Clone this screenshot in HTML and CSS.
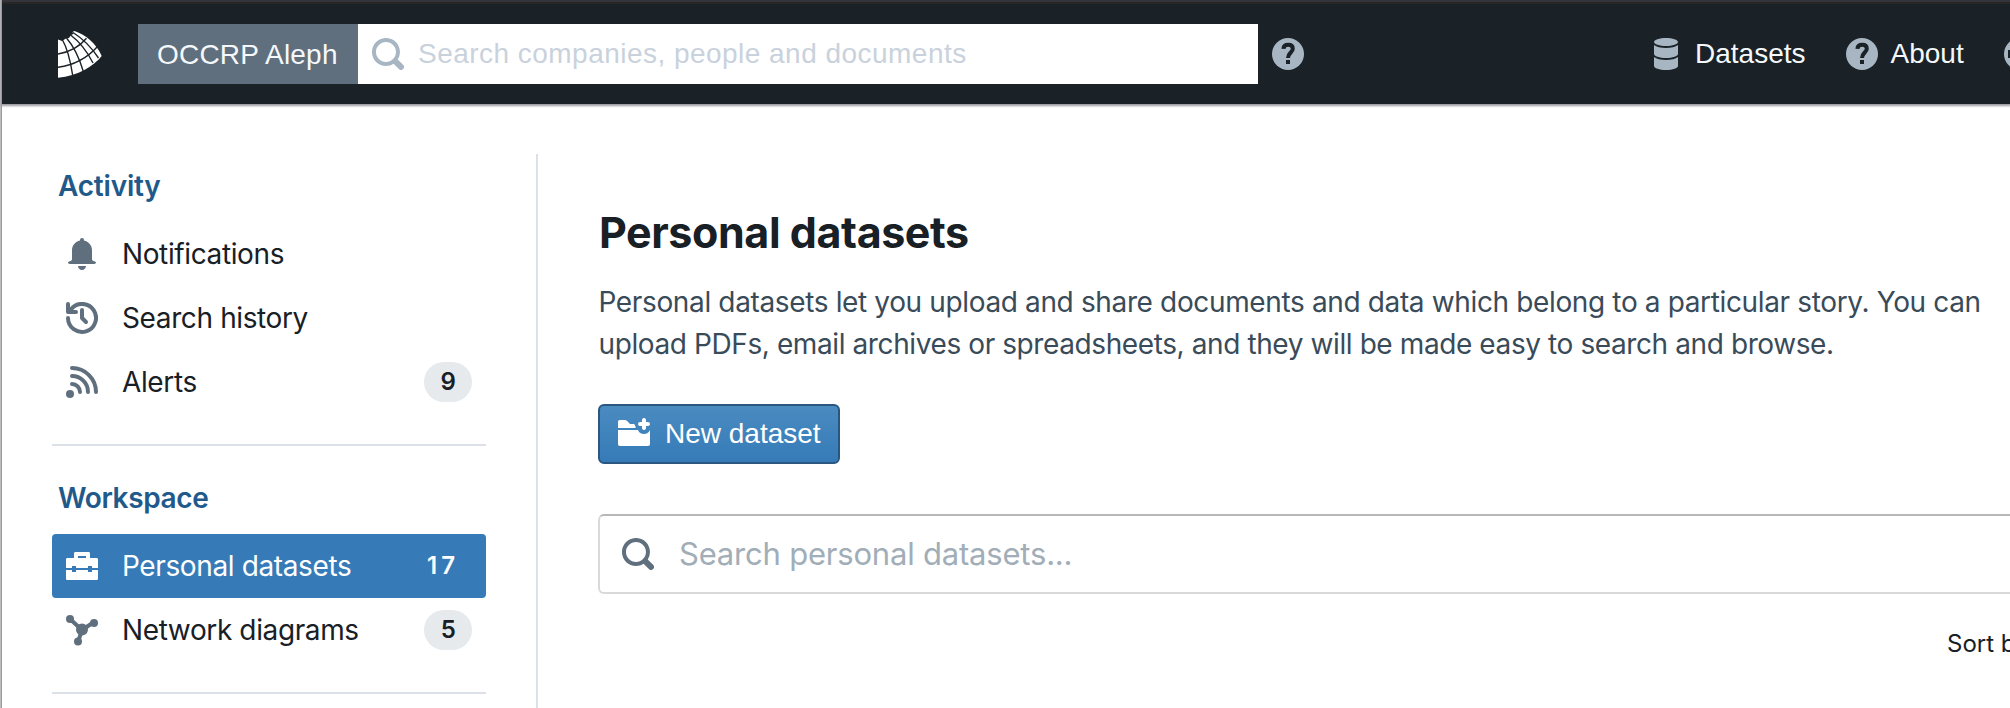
FILE: index.html
```html
<!DOCTYPE html>
<html lang="en">
<head>
<meta charset="utf-8">
<title>Personal datasets - OCCRP Aleph</title>
<link rel="stylesheet" href="styles.css">
</head>
<body>
<svg class="sprite" aria-hidden="true">
  <symbol id="search" viewBox="0 0 16 16"><path d="M15.55 13.43l-2.67-2.68a6.94 6.94 0 001.11-3.76c0-3.87-3.13-7-7-7s-7 3.13-7 7 3.13 7 7 7c1.39 0 2.68-.42 3.76-1.11l2.68 2.67a1.498 1.498 0 102.12-2.12zm-8.56-1.44c-2.76 0-5-2.24-5-5s2.24-5 5-5 5 2.24 5 5-2.24 5-5 5z"/></symbol>
  <symbol id="help" viewBox="0 0 16 16"><circle cx="8" cy="8" r="8"/><path class="cut" d="M5.7 5.45C5.8 4.1 6.75 3.4 8.1 3.4c1.4 0 2.3.75 2.3 1.95 0 1.9-2.4 2-2.4 4.65"/><path class="cut-fill" d="M7 11h2v2H7z"/></symbol>
  <symbol id="database" viewBox="0 0 16 16"><path d="M8 4c3.31 0 6-.9 6-2s-2.69-2-6-2C4.68 0 2 .9 2 2s2.68 2 6 2zm-6-.48V8c0 1.1 2.69 2 6 2s6-.9 6-2V3.520C12.78 4.4 10.56 5 8 5s-4.78-.6-6-1.48zm0 6V14c0 1.1 2.69 2 6 2s6-.9 6-2V9.520C12.78 10.4 10.56 11 8 11s-4.78-.6-6-1.48z"/></symbol>
</svg>
<div class="window-edge"></div>
<div class="app">
  <header class="navbar">
    <svg class="logo" viewBox="0 0 44 48">
      <path fill="#fff" d="M0 9.500L4 11 8 8.500 11 8 13 5 15.500 4 14.500 2 16.500 1C28 5 38 13 43.700 26 36 36 20 46 0 47.700z"/>
      <g class="logo-grid"><path d="M0 24Q18 21 28.500 8.300M0 37.300Q24 34 39.500 16.500"/><path d="M4 9Q11 21 14.700 45.500M8.500 8Q19 20 25.500 42M12 4.500Q26 15 35 33M15 2.500Q30 12 40.500 28"/></g>
    </svg>
    <div class="scope">OCCRP Aleph</div>
    <div class="search-box"><svg class="icon"><use href="#search"/></svg><span>Search companies, people and documents</span></div>
    <svg class="icon nav-help"><use href="#help"/></svg>
    <nav class="links">
      <a><svg class="icon"><use href="#database"/></svg>Datasets</a>
      <a><svg class="icon"><use href="#help"/></svg>About</a>
      <a><svg class="icon" viewBox="0 0 16 16"><circle cx="8" cy="8" r="8"/><path class="cut-fill" d="M2 6h12v4H2z"/></svg></a>
    </nav>
  </header>
  <div class="page">
    <aside class="sidebar">
      <section>
        <h2>Activity</h2>
        <a class="item"><svg class="icon" viewBox="0 0 16 16"><path d="M8 0a1 1 0 011 1v.2C11.300 1.700 13 3.700 13 6v4.500c0 .7.500 1 1.100 1.100.500.1.900.4.900.7 0 .4-.4.700-.9.700H1.900c-.5 0-.9-.3-.9-.7 0-.3.400-.6.900-.7.600-.1 1.100-.4 1.100-1.100V6c0-2.300 1.700-4.300 4-4.800V1a1 1 0 011-1zM6 14h4c0 1.100-.9 2-2 2s-2-.9-2-2z"/></svg><span>Notifications</span></a>
        <a class="item"><svg class="icon line" viewBox="0 0 16 16"><path d="M1 8A7 7 0 1 0 2.600 3.500L1.500 4.700"/><path d="M1 1v4h4M8 4v4l2 2"/><path class="solid" d="M1 2l3 3H1z"/></svg><span>Search history</span></a>
        <a class="item"><svg class="icon line" viewBox="0 0 16 16"><path d="M3 1c6.600 0 12 5.400 12 12M3 5c4.400 0 8 3.600 8 8M3 9c2.200 0 4 1.800 4 4"/><circle class="solid" cx="2" cy="14" r="2"/></svg><span>Alerts</span><b class="count">9</b></a>
      </section>
      <section>
        <h2>Workspace</h2>
        <a class="item active"><svg class="icon" viewBox="0 0 16 16"><path fill-rule="evenodd" d="M4 4V1.700C4 1.300 4.300 1 4.700 1h6.600c.4 0 .7.300.7.700V4h3.200c.5 0 .8.300.8.800V9h-3V8h-2v1H5V8H3v1H0V4.800C0 4.300.3 4 .8 4zm2 0h4V3H6zM0 10h3v1h2v-1h6v1h2v-1h3v4.200c0 .5-.3.800-.8.800H.8c-.5 0-.8-.3-.8-.8z"/></svg><span>Personal datasets</span><b class="count">17</b></a>
        <a class="item"><svg class="icon line" viewBox="0 0 16 16"><path d="M2 2.500l6 5.500 6-4M8 8l-2 6"/><g class="solid"><circle cx="2" cy="2.500" r="2"/><circle cx="14" cy="4.500" r="2"/><circle cx="6" cy="13.700" r="2"/><circle cx="8" cy="7.700" r="3"/></g></svg><span>Network diagrams</span><b class="count">5</b></a>
      </section>
    </aside>
    <main class="content">
      <h1>Personal datasets</h1>
      <p><span class="lead">Personal datasets let you upload and share documents and data which belong to a particular story. You can</span><br>upload PDFs, email archives or spreadsheets, and they will be made easy to search and browse.</p>
      <button class="primary"><svg class="icon" viewBox="0 0 16 16"><path d="M0 5V1.800C0 1.400.4 1 .9 1H3c.6 0 1.300.2 1.700.6L6 3h2c.3 0 .5.900.8 1.300V5zM0 6h10c.4 1.200 1.600 2 3 2 1.300 0 2.500-.8 3-2v7c0 .6-.4 1-1 1H1c-.6 0-1-.4-1-1z"/><path class="plus" d="M13 1v4M11 3h4"/></svg>New dataset</button>
      <div class="filter"><svg class="icon"><use href="#search"/></svg><span>Search personal datasets...</span></div>
      <div class="sort">Sort by</div>
    </main>
  </div>
</div>
</body>
</html>
```
FILE: styles.css
```css
* { box-sizing: border-box; }
body {
  margin: 0;
  height: 708px;
  overflow: hidden;
  display: flex;
  background: #fff;
  color: #182026;
  font: 28px/36px Inter, "Liberation Sans", sans-serif;
}
.sprite { position: absolute; width: 0; height: 0; }
.window-edge { flex: 0 0 2px; background: linear-gradient(90deg, #bcbbc0 1px, #9a999f 1px); }
.app { flex: 1; min-width: 0; }
.icon { flex: none; display: block; width: 32px; height: 32px; fill: currentColor; }
.line { fill: none; stroke: currentColor; stroke-width: 2; stroke-linecap: round; stroke-linejoin: round; }
.solid { fill: currentColor; stroke: none; }
.cut { fill: none; stroke: #1a2127; stroke-width: 2; }
.cut-fill { fill: #1a2127; }

.navbar {
  height: 104px;
  display: flex;
  align-items: center;
  padding: 4px 0 0 56px;
  background: linear-gradient(#333439 2px, #292627 2px, #292627 4px, #1a2127 4px);
  box-shadow: 0 1px 2px 1px #9a9aa0;
  font-family: "Liberation Sans", sans-serif;
  color: #f5f8fa;
}
.navbar > * { flex: none; }
.logo { width: 44px; height: 48px; margin-right: 36px; }
.logo-grid { fill: none; stroke: #1a2127; stroke-width: 1.4; }
.scope {
  width: 220px;
  height: 60px;
  padding-left: 19px;
  line-height: 61px;
  letter-spacing: 0.2px;
  background: #5f6f7e;
}
.search-box {
  width: 900px;
  height: 60px;
  padding-left: 14px;
  display: flex;
  align-items: center;
  gap: 14px;
  background: #fff;
  color: #c9d2dc;
  letter-spacing: 0.47px;
}
.search-box .icon, .navbar > .nav-help, .links .icon { color: #a7b6c2; }
.nav-help { margin-left: 14px; }
.links { display: flex; margin-left: 346px; }
.links a { display: flex; align-items: center; gap: 13px; margin-right: 40px; }

.page { display: flex; padding: 50px 0 0 50px; height: 604px; }
.sidebar {
  flex: 0 0 486px;
  padding-right: 50px;
  border-right: 2px solid #dbe1e6;
  letter-spacing: -0.38px;
}
.sidebar section { padding-bottom: 30px; border-bottom: 2px solid #dbe1e6; }
.sidebar section + section { padding-top: 34px; }
.sidebar h2 {
  margin: 0;
  height: 54px;
  padding: 0 6px;
  font-size: 28px;
  font-weight: 600;
  line-height: 36px;
  color: #215a8a;
}
.sidebar section:first-child h2 { height: 68px; padding-top: 14px; letter-spacing: -0.2px; }
.item { display: flex; align-items: center; height: 64px; padding: 0 14px; border-radius: 4px; }
.item .icon { margin-right: 24px; color: #5f6f7e; }
.item span { flex: 1; }
.count {
  width: 48px;
  height: 40px;
  border-radius: 20px;
  background: #e6eaed;
  text-align: center;
  font-size: 24px;
  font-weight: 600;
  line-height: 40px;
}
.active, .active .icon { background: #367bb8; color: #fff; }
.active .count {
  background: none;
  padding-right: 10px;
  letter-spacing: 4px;
}

.content { flex: 1; min-width: 0; padding: 53px 0 0 60px; }
.content h1 {
  margin: 0;
  padding-left: 1px;
  font-size: 43px;
  line-height: 50px;
  font-weight: 700;
  letter-spacing: -0.42px;
}
.content p {
  margin: 24px 0 39px;
  padding-left: 0.5px;
  line-height: 42px;
  letter-spacing: -0.4px;
  white-space: nowrap;
  color: #394b59;
}
.lead { letter-spacing: -0.36px; }
.primary {
  display: flex;
  align-items: center;
  gap: 15px;
  width: 242px;
  height: 60px;
  padding: 0 18px;
  border: 2px solid #2a5780;
  border-radius: 6px;
  background: linear-gradient(#4a8bc0, #367bb8);
  color: #fff;
  font: 28px/36px "Liberation Sans", sans-serif;
  white-space: nowrap;
}
.plus { fill: none; stroke: currentColor; stroke-width: 2; stroke-linecap: round; }
.filter {
  display: flex;
  align-items: center;
  gap: 25px;
  height: 80px;
  margin-top: 50px;
  padding-left: 22px;
  border: 2px solid #d9d9da;
  border-top-color: #b8b8b9;
  border-right: 0;
  border-radius: 6px 0 0 6px;
  color: #a1adb7;
  font-size: 31px;
  letter-spacing: -0.2px;
}
.filter .icon { color: #5f6f7e; }
.sort { margin: 32px 0 0 1349px; font-size: 24px; white-space: nowrap; }
```
